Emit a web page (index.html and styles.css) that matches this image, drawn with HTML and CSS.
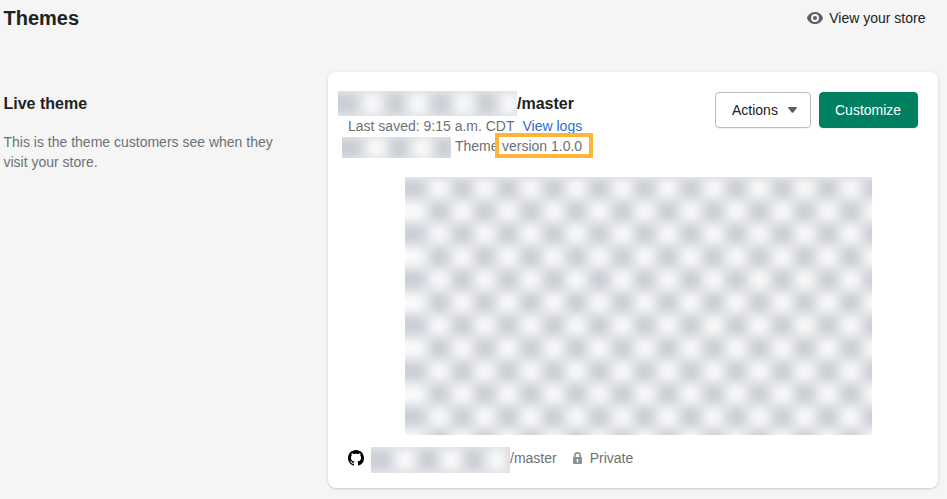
FILE: index.html
```
<!DOCTYPE html>
<html lang="en">
<head>
<meta charset="utf-8">
<title>Themes</title>
<link rel="stylesheet" href="styles.css">
</head>
<body>
<header class="page-header">
  <h1>Themes</h1>
  <a class="store-link">
    <svg class="eye" viewBox="0 0 16 12"><path fill-rule="evenodd" d="M8 0C3.5 0 .9 3.5.1 5.6a1.2 1.2 0 0 0 0 .8C.9 8.500 3.500 12 8 12s7.100-3.500 7.900-5.600a1.200 1.200 0 0 0 0-.8C15.100 3.500 12.500 0 8 0zm0 10a4 4 0 1 1 0-8 4 4 0 0 1 0 8z"/><circle cx="8" cy="6" r="2"/></svg>
    <span>View your store</span>
  </a>
</header>
<main class="layout">
  <section class="intro">
    <h2>Live theme</h2>
    <p>This is the theme customers see when they visit your store.</p>
  </section>
  <article class="card">
    <div class="card-top">
      <div class="details">
        <div class="name-row">
          <svg class="mask mask-name">
            <defs>
              <pattern id="checks" width="45.7" height="45.7" patternUnits="userSpaceOnUse">
                <rect width="45.7" height="45.7" fill="#fcfdfd"/>
                <rect width="22.85" height="22.85" fill="#c6c9d0"/>
                <rect x="22.85" y="22.85" width="22.85" height="22.85" fill="#c6c9d0"/>
              </pattern>
              <pattern id="edge" width="80" height="45.7" patternUnits="userSpaceOnUse" x="-40">
                <rect width="80" height="45.7" fill="#fcfdfd"/>
                <rect width="80" height="22.85" fill="#c8ccd4"/>
              </pattern>
              <filter id="soft" filterUnits="userSpaceOnUse" x="-40" y="-40" width="560" height="350" color-interpolation-filters="sRGB"><feGaussianBlur stdDeviation="6.2"/></filter>
              <g id="mosaic" filter="url(#soft)">
                <rect x="-40" y="-40" width="560" height="350" fill="url(#checks)"/>
                <rect x="-40" y="-40" width="62.85" height="350" fill="url(#edge)"/>
              </g>
            </defs>
            <use href="#mosaic" transform="translate(0 -1) scale(1 1.2)"/>
          </svg><strong>/master</strong>
        </div>
        <div class="saved-row"><span>Last saved: 9:15 a.m. CDT</span><a>View logs</a></div>
        <div class="version-row">
          <svg class="mask mask-version"><use href="#mosaic" transform="translate(0 -2) scale(1 1.15)"/></svg>
          <span class="theme-word">Theme</span><span class="version">version 1.0.0</span>
        </div>
      </div>
      <div class="buttons">
        <button class="btn">Actions<svg class="caret" viewBox="0 0 9 6"><path d="M.5 0h8q.7.200.3.900L5.300 5.400q-.8.900-1.600 0L.2.900Q-.2.200.5 0z"/></svg></button>
        <button class="btn primary">Customize</button>
      </div>
    </div>
    <svg class="mask preview"><use href="#mosaic"/></svg>
    <footer class="source">
      <svg class="github" viewBox="0 0 16 16"><path d="M8 0C3.580 0 0 3.580 0 8c0 3.540 2.290 6.530 5.470 7.590.4.070.55-.17.55-.38 0-.19-.01-.82-.01-1.490-2.010.37-2.530-.49-2.690-.94-.09-.23-.48-.94-.82-1.130-.28-.15-.68-.52-.01-.53.63-.01 1.080.58 1.230.82.720 1.210 1.870.87 2.330.66.070-.52.280-.87.510-1.070-1.780-.2-3.640-.89-3.640-3.950 0-.87.310-1.590.82-2.150-.08-.2-.36-1.020.08-2.120 0 0 .67-.21 2.200.82.640-.18 1.320-.27 2-.27s1.360.09 2 .27c1.530-1.040 2.200-.82 2.200-.82.440 1.100.16 1.920.08 2.120.51.56.82 1.270.82 2.150 0 3.070-1.870 3.750-3.650 3.950.29.25.54.73.54 1.480 0 1.070-.01 1.930-.01 2.200 0 .21.15.46.55.38A8.010 8.010 0 0 0 16 8c0-4.420-3.580-8-8-8z"/></svg>
      <svg class="mask mask-source"><use href="#mosaic" transform="translate(0 -1) scale(1 1.2)"/></svg><span>/master</span>
      <svg class="lock" viewBox="0 0 9 12"><path fill-rule="evenodd" d="M1 5V3.500a3.500 3.500 0 0 1 7 0V5h.2q.8 0 .8.800v5.400q0 .8-.8.800H.8Q0 12 0 11.200V5.800Q0 5 .8 5zm1.700 0h3.600V3.500a1.800 1.800 0 0 0-3.600 0zM4.500 7a1.100 1.100 0 0 0-.6 2v1.500h1.200V9a1.100 1.100 0 0 0-.6-2z"/></svg>
      <span>Private</span>
    </footer>
  </article>
</main>
</body>
</html>
```
FILE: styles.css
```
* { box-sizing: border-box; }
body {
  margin: 0;
  height: 499px;
  overflow: hidden;
  background: #f5f5f5;
  color: #202223;
  font: 14px/20px "Liberation Sans", Arial, sans-serif;
}
h1, h2, p { margin: 0; }
svg { display: block; flex: none; }
.page-header {
  display: flex;
  justify-content: space-between;
  align-items: center;
  height: 36px;
  padding: 0 21.500px 0 3.500px;
}
h1 { font-size: 20px; line-height: 28px; }
.store-link { display: flex; align-items: center; gap: 6px; }
.eye { width: 16px; height: 12px; fill: #5c5f62; }
.layout {
  display: grid;
  grid-template-columns: 324.500px 610px;
  margin: 36px 0 0 3.500px;
}
.intro { padding-top: 21px; }
h2 { font-size: 16px; line-height: 22px; }
.intro p { width: 285px; margin-top: 17px; color: #6d7175; }
.card {
  height: 415.500px;
  background: #fff;
  border-radius: 8px;
  box-shadow: 0 0 5px rgba(23, 24, 24, .05), 0 1px 2px rgba(0, 0, 0, .15);
  color: #6d7175;
}
.card-top {
  display: flex;
  justify-content: space-between;
  height: 105px;
  padding: 19px 20px 0 10px;
}
.mask { overflow: hidden; }
.name-row { display: flex; height: 25px; color: #202223; font-size: 16px; line-height: 25px; }
.mask-name { width: 179px; height: 25px; }
.saved-row { display: flex; gap: 8px; padding-left: 10px; }
.saved-row a { color: #2c6ecb; }
.version-row { display: flex; align-items: center; height: 20px; padding-left: 4px; }
.mask-version { width: 109px; height: 21px; position: relative; top: 1px; }
.theme-word { width: 40px; margin-left: 4px; }
.version {
  position: relative;
  top: -1px;
  width: 98px;
  height: 25px;
  padding-left: 3px;
  border: 4px solid #ffb43a;
  background: #fff;
  line-height: 19px;
  white-space: nowrap;
}
.buttons { display: flex; gap: 8px; padding-top: 1px; }
.btn {
  display: flex;
  align-items: center;
  gap: 10px;
  width: 96px;
  height: 36px;
  padding: 0 0 0 16px;
  border: 1px solid #babfc3;
  border-radius: 4px;
  box-shadow: 0 1px 0 rgba(0, 0, 0, .05);
  background: #fff;
  color: #202223;
  font: inherit;
}
.caret { width: 9px; height: 6px; fill: #5c5f62; }
.btn.primary { width: 99px; padding-left: 15px; border-color: #008060; background: #008060; color: #fff; }
.preview { width: 467px; height: 258px; margin-left: 77.400px; }
.source { display: flex; align-items: center; height: 26px; margin-top: 12px; padding-left: 20px; }
.source span { position: relative; top: -2px; }
.github { width: 16px; height: 16px; margin: 0 7px 4px 0; fill: #000; }
.mask-source { width: 139px; height: 26px; }
.lock { width: 9px; height: 12px; margin: 0 8px 4px 16px; fill: #8c9196; }
```
